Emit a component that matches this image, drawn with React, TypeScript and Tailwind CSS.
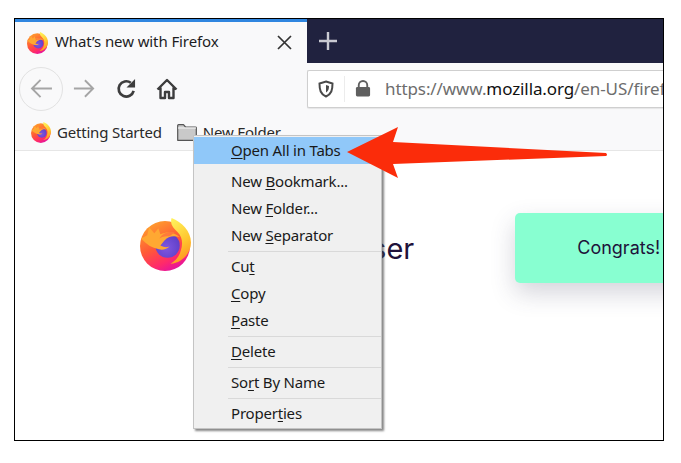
import { useId } from 'react';

function FirefoxLogo({ className }: { className: string }) {
  const id = useId();
  return (
    <svg viewBox="0 0 50 52" className={className}>
      <defs>
        <linearGradient id={`${id}a`} x1="0.15" y1="0.1" x2="0.6" y2="1">
          <stop offset="0" stopColor="#ff9a2e" />
          <stop offset="0.45" stopColor="#ff5a36" />
          <stop offset="0.8" stopColor="#ff2a6a" />
          <stop offset="1" stopColor="#e7159a" />
        </linearGradient>
        <linearGradient id={`${id}b`} x1="0.3" y1="0" x2="0.6" y2="1">
          <stop offset="0" stopColor="#fff05a" />
          <stop offset="0.55" stopColor="#ffc62e" />
          <stop offset="1" stopColor="#ff8f1f" />
        </linearGradient>
        <radialGradient id={`${id}c`} cx="0.45" cy="0.6" r="0.7">
          <stop offset="0" stopColor="#7f56e0" />
          <stop offset="1" stopColor="#5a3cc4" />
        </radialGradient>
      </defs>
      <circle cx="24.500" cy="27.500" r="24.500" fill={`url(#${id}a)`} />
      <path d="M31 0c-2 6 2 10 6 14 5 5 5 12 3 18-1 5-5 10-10 13 11-1 20-10 20-21C50 13 41 4 31 0z" fill={`url(#${id}b)`} />
      <circle cx="27" cy="27" r="12" fill={`url(#${id}c)`} />
      <path d="M1 20l6-3 2-8 5 6 4-5 2 6c7-3 14-2 19 3-6-2-11-1-15 3l-4 5c4 2 6 2 9 1-3 3-8 4-13 2-7-2-11-6-15-10z" fill="#ffa832" />
      <path d="M34 14c-6-1-12 1-15 6 4-2 7-2 10-2z" fill="#ff7a3a" />
    </svg>
  );
}

function MenuRow({ pre, key_, post, active }: { pre?: string; key_: string; post?: string; active?: boolean }) {
  return (
    <div className={`h-[27px] pl-[37px] flex items-center text-[15px] tracking-[-0.2px] leading-none text-[#1a1a1a] ${active ? 'bg-[#90c8f9]' : ''}`}>
      <span>
        {pre}
        <span className="underline underline-offset-2">{key_}</span>
        {post}
      </span>
    </div>
  );
}

function MenuSep() {
  return <div className="h-[4px] ml-[34px] flex items-center"><div className="h-px w-full bg-[#d9d9d9]" /></div>;
}

export default function App() {
  return (
    <div className="w-[681px] h-[463px] bg-white pt-[18px] pl-[14px] font-['Noto_Sans','Open_Sans',sans-serif]">
      <div className="relative w-[650px] h-[423px] border border-black overflow-hidden flex flex-col bg-white">
        {/* tab strip */}
        <div className="flex h-[44px] shrink-0">
          <div className="w-[292px] bg-[#f9f9fa] border-t-[3px] border-[#2f86e0] flex items-center pl-[12px] pr-[15px]">
            <FirefoxLogo className="w-[21px] h-[22px] shrink-0" />
            <span className="ml-[7px] mb-[2px] text-[15px] leading-none text-[#1d1d1f] tracking-[-0.1px]">What’s new with Firefox</span>
            <svg viewBox="0 0 15 15" className="ml-auto w-[15px] h-[15px]">
              <path d="M1 1l13 13M14 1L1 14" stroke="#333" strokeWidth="1.7" />
            </svg>
          </div>
          <div className="flex-1 bg-[#20223f] flex items-center pl-[11px]">
            <svg viewBox="0 0 20 20" className="w-[20px] h-[20px]">
              <path d="M10 1v18M1 10h18" stroke="#c9cad2" strokeWidth="2.400" />
            </svg>
          </div>
        </div>

        {/* nav bar */}
        <div className="flex items-center h-[51px] shrink-0 bg-[#f9f9fa]">
          <div className="ml-[4px] w-[44px] h-[44px] rounded-full border border-[#e2e2e2] flex items-center justify-center">
            <svg viewBox="0 0 24 20" className="w-[23px] h-[19px]">
              <path d="M23 10H2M11 1l-9 9 9 9" fill="none" stroke="#a5a5a5" strokeWidth="2" />
            </svg>
          </div>
          <svg viewBox="0 0 24 20" className="ml-[10px] w-[22px] h-[19px]">
            <path d="M1 10h21M13 1l9 9-9 9" fill="none" stroke="#a5a5a5" strokeWidth="2" />
          </svg>
          <svg viewBox="0 0 22 22" className="ml-[21px] w-[21px] h-[21px]">
            <path d="M18.500 13.500A8 8 0 1 1 15.500 5" fill="none" stroke="#3d3d3d" strokeWidth="2.800" />
            <path d="M20 1v9h-9z" fill="#3d3d3d" />
          </svg>
          <svg viewBox="0 0 22 22" className="ml-[19px] w-[22px] h-[22px]">
            <path d="M1.500 11.500L11 2l9.500 9.500M4.500 9.500V20h4.500v-6h4v6h4.500V9.500" fill="none" stroke="#3d3d3d" strokeWidth="2.400" strokeLinejoin="round" />
          </svg>
          <div className="ml-[129px] flex-1 h-[38px] bg-white border border-[#cfcfcf] border-r-0 rounded-l-[2px] flex items-center whitespace-nowrap overflow-hidden shadow-[0_1px_1px_rgba(0,0,0,0.08)]">
            <svg viewBox="0 0 16 18" className="ml-[10px] w-[16px] h-[18px] shrink-0">
              <path d="M8 1.500l6.500 2c0 6.500-1 10.500-6.500 13C2.500 14 1.500 10 1.500 3.500z" fill="none" stroke="#4a4a4a" strokeWidth="2" />
              <path d="M8 5l3 1c0 3-.5 5-3 6.500z" fill="#4a4a4a" />
            </svg>
            <div className="ml-[10px] w-px h-[26px] bg-[#ececec] shrink-0" />
            <svg viewBox="0 0 16 18" className="ml-[10px] w-[16px] h-[17px] shrink-0">
              <path d="M3.500 8V5.500a4.500 4.500 0 0 1 9 0V8" fill="none" stroke="#5f5f5f" strokeWidth="2" />
              <rect x="0.500" y="7.500" width="15" height="10" rx="1.500" fill="#5f5f5f" />
            </svg>
            <span className="ml-[14px] text-[17px] tracking-[-0.1px] leading-none text-[#6d6d6d]">
              https://www.<span className="text-[#111]">mozilla.org</span>/en-US/firefox/
            </span>
          </div>
        </div>

        {/* bookmarks bar */}
        <div className="flex items-center h-[37px] shrink-0 bg-[#f9f9fa] border-b border-[#e6e6e6] text-[15px] tracking-[-0.2px] leading-none text-[#2a2a2a]">
          <FirefoxLogo className="ml-[16px] w-[20px] h-[21px]" />
          <span className="ml-[6px] pt-[1px]">Getting Started</span>
          <svg viewBox="0 0 20 17" className="ml-[15px] w-[20px] h-[17px]">
            <path d="M.7 16.300V1.500a.8.8 0 0 1 .8-.8h5l2 2.300h10a.8.8 0 0 1 .8.8v12.500z" fill="#c9c9c9" stroke="#555" strokeWidth="1.200" strokeLinejoin="round" />
            <path d="M1 4h18" stroke="#f2f2f2" strokeWidth="1.200" />
          </svg>
          <span className="ml-[6px] pt-[1px]">New Folder</span>
        </div>

        {/* page */}
        <div className="flex-1 flex items-center bg-white">
          <FirefoxLogo className="ml-[125px] mt-[-102px] w-[51px] h-[53px] shrink-0" />
          <span className="ml-[8px] mt-[-94px] w-[216px] text-right font-['Inter',sans-serif] text-[29px] leading-none text-[#20123a] whitespace-nowrap">Firefox Browser</span>
          <div className="ml-[101px] mt-[-96px] w-[180px] h-[70px] shrink-0 rounded-[5px] bg-[#88ffd1] pl-[62px] flex items-center font-['Inter',sans-serif] text-[18px] text-[#20123a] shadow-[0_10px_24px_rgba(60,60,90,0.22)]">
            Congrats!
          </div>
        </div>

        {/* context menu */}
        <div className="absolute left-[178px] top-[116px] w-[189px] bg-[#f0f0f0] border border-[#c4c4c4] shadow-[2px_2px_2px_rgba(70,70,70,0.65)] pt-[1px] pb-[1px]">
          <MenuRow key_="O" post="pen All in Tabs" active />
          <div className="h-[4px]" />
          <MenuRow pre="New " key_="B" post="ookmark..." />
          <MenuRow pre="New " key_="F" post="older..." />
          <MenuRow pre="New " key_="S" post="eparator" />
          <MenuSep />
          <MenuRow pre="Cu" key_="t" />
          <MenuRow key_="C" post="opy" />
          <MenuRow key_="P" post="aste" />
          <MenuSep />
          <MenuRow key_="D" post="elete" />
          <MenuSep />
          <MenuRow pre="So" key_="r" post="t By Name" />
          <MenuSep />
          <MenuRow pre="Proper" key_="t" post="ies" />
        </div>

        {/* red arrow */}
        <svg viewBox="0 0 264 56" className="absolute left-[331px] top-[107px] w-[264px] h-[56px]">
          <path d="M1 26L52 1L47 16L260 27Q262 29 260 30L47 38L52 52z" fill="#fb2c0a" />
        </svg>
      </div>
    </div>
  );
}
